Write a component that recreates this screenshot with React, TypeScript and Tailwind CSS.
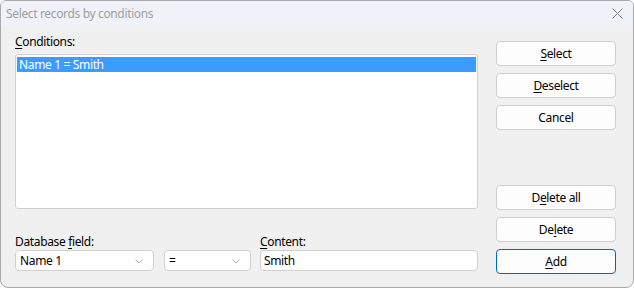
import React from "react";

const font = { fontFamily: '"Noto Sans", "Liberation Sans", sans-serif', letterSpacing: "-0.35px" };

function Btn({ children, primary }: { children: React.ReactNode; primary?: boolean }) {
  return (
    <div
      className={
        "h-[25px] w-[120px] rounded-[4px] bg-[#fdfdfd] flex items-center justify-center text-[12px] text-black leading-none border " +
        (primary ? "border-[#0067c0]" : "border-[#d0d0d0]")
      }
    >
      {children}
    </div>
  );
}

function Chevron() {
  return (
    <svg width="8" height="5" viewBox="0 0 8 5" className="absolute right-[10px] top-[8px]">
      <path d="M0.5 0.5 L4 4 L7.5 0.5" fill="none" stroke="#a8a8a8" strokeWidth="1" />
    </svg>
  );
}

function Combo({ w, text }: { w: string; text: string }) {
  return (
    <div className={"relative h-[21px] rounded-[4px] border border-[#d0d0d0] bg-white flex items-center pl-[4px] text-[12px] text-black " + w}>
      {text}
      <Chevron />
    </div>
  );
}

export default function App() {
  return (
    <div
      style={font}
      className="w-[634px] h-[288px] border border-[#a9a9a9] rounded-t-[6px] rounded-b-[8px] overflow-hidden bg-[#f0f0f0] flex flex-col"
    >
      <div className="h-[25px] bg-[#eff2f8] flex items-center justify-between pl-[5px] pr-[10px] shrink-0">
        <span className="text-[12px] text-[#a0a0a0]">Select records by conditions</span>
        <svg width="11" height="11" viewBox="0 0 11 11">
          <path d="M0.5 0.5 L10.5 10.5 M10.5 0.5 L0.5 10.5" stroke="#858585" strokeWidth="1" />
        </svg>
      </div>
      <div className="flex flex-1 pl-[14px]">
        <div className="w-[463px] flex flex-col">
          <div className="pt-[8px] h-[24px] text-[12px] leading-[16px] text-black">
            <span className="underline underline-offset-2">C</span>onditions:
          </div>
          <div className="mt-[4px] h-[155px] rounded-[3px] border border-[#d0d0d0] bg-white pt-[2px] px-[1px]">
            <div className="h-[15px] bg-[#3c9bff] text-white text-[12px] leading-[15px] pl-[2px]">Name 1 = Smith</div>
          </div>
          <div className="flex mt-[25px]">
            <div className="flex flex-col w-[139px]">
              <div className="h-[16px] leading-[16px] text-[12px] text-black">
                Database <span className="underline underline-offset-2">f</span>ield:
              </div>
              <Combo w="w-[139px]" text="Name 1" />
            </div>
            <div className="flex flex-col w-[87px] ml-[10px]">
              <div className="h-[16px]" />
              <Combo w="w-[87px]" text="=" />
            </div>
            <div className="flex flex-col w-[218px] ml-[9px]">
              <div className="h-[16px] leading-[16px] text-[12px] text-black">
                <span className="underline underline-offset-2">C</span>ontent:
              </div>
              <div className="h-[21px] rounded-[4px] border border-[#d0d0d0] bg-white flex items-center pl-[3px] text-[12px] text-black">
                Smith
              </div>
            </div>
          </div>
        </div>
        <div className="ml-[18px] pt-[15px] flex flex-col gap-[7px]">
          <Btn>
            <span className="underline underline-offset-2">S</span>elect
          </Btn>
          <Btn>
            <span className="underline underline-offset-2">D</span>eselect
          </Btn>
          <Btn>Cancel</Btn>
          <div className="h-[41px]" />
          <Btn>
            D<span className="underline underline-offset-2">e</span>lete all
          </Btn>
          <Btn>
            De<span className="underline underline-offset-2">l</span>ete
          </Btn>
          <Btn primary>
            <span className="underline underline-offset-2">A</span>dd
          </Btn>
        </div>
      </div>
    </div>
  );
}
